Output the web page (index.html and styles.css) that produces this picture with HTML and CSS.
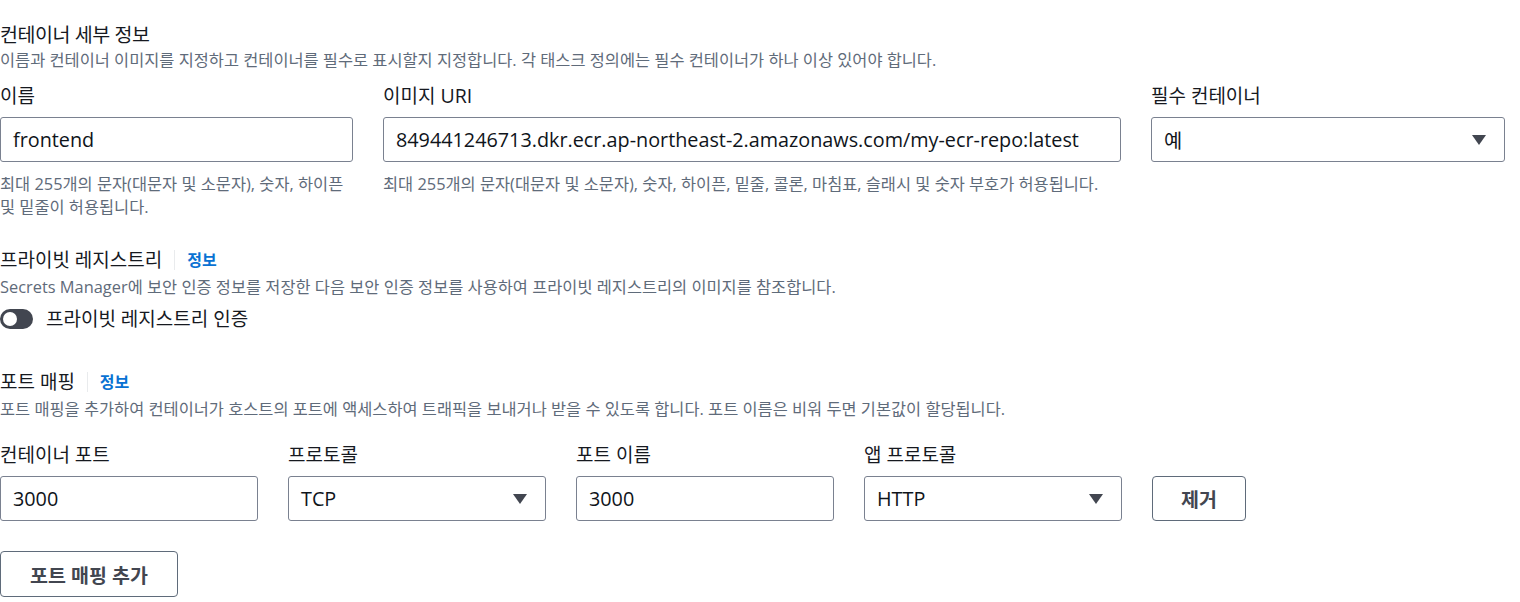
FILE: index.html
```html
<!DOCTYPE html>
<html lang="ko">
<head>
<meta charset="utf-8">
<title>컨테이너 세부 정보</title>
<link rel="stylesheet" href="styles.css">
</head>
<body>
<main class="page">
  <section class="sec sec-details">
    <h2 class="title">컨테이너 세부 정보</h2>
    <p class="desc">이름과 컨테이너 이미지를 지정하고 컨테이너를 필수로 표시할지 지정합니다. 각 태스크 정의에는 필수 컨테이너가 하나 이상 있어야 합니다.</p>
    <div class="grid3">
      <div class="field">
        <label class="label">이름</label>
        <div class="control"><span class="val">frontend</span></div>
        <p class="help">최대 255개의 문자(대문자 및 소문자), 숫자, 하이픈 및 밑줄이 허용됩니다.</p>
      </div>
      <div class="field">
        <label class="label">이미지 <span class="lat">URI</span></label>
        <div class="control"><span class="val">849441246713.dkr.ecr.ap-northeast-2.amazonaws.com/my-ecr-repo:latest</span></div>
        <p class="help">최대 255개의 문자(대문자 및 소문자), 숫자, 하이픈, 밑줄, 콜론, 마침표, 슬래시 및 숫자 부호가 허용됩니다.</p>
      </div>
      <div class="field">
        <label class="label">필수 컨테이너</label>
        <div class="control select"><span class="val">예</span><svg class="caret" width="14" height="10" viewBox="0 0 14 10"><path d="M0 0h14L7 10z"/></svg></div>
      </div>
    </div>
  </section>

  <section class="sec sec-registry">
    <div class="head"><span>프라이빗 레지스트리</span><span class="divider"></span><a class="info">정보</a></div>
    <p class="desc desc-tight">Secrets Manager에 보안 인증 정보를 저장한 다음 보안 인증 정보를 사용하여 프라이빗 레지스트리의 이미지를 참조합니다.</p>
    <div class="toggle-row">
      <span class="toggle"><span class="knob"></span></span>
      <span class="toggle-label">프라이빗 레지스트리 인증</span>
    </div>
  </section>

  <section class="sec sec-ports">
    <div class="head"><span>포트 매핑</span><span class="divider"></span><a class="info">정보</a></div>
    <p class="desc desc-tight">포트 매핑을 추가하여 컨테이너가 호스트의 포트에 액세스하여 트래픽을 보내거나 받을 수 있도록 합니다. 포트 이름은 비워 두면 기본값이 할당됩니다.</p>
    <div class="port-grid">
      <div class="field">
        <label class="label">컨테이너 포트</label>
        <div class="control"><span class="val">3000</span></div>
      </div>
      <div class="field">
        <label class="label">프로토콜</label>
        <div class="control select"><span class="val">TCP</span><svg class="caret" width="14" height="10" viewBox="0 0 14 10"><path d="M0 0h14L7 10z"/></svg></div>
      </div>
      <div class="field">
        <label class="label">포트 이름</label>
        <div class="control"><span class="val">3000</span></div>
      </div>
      <div class="field">
        <label class="label">앱 프로토콜</label>
        <div class="control select"><span class="val">HTTP</span><svg class="caret" width="14" height="10" viewBox="0 0 14 10"><path d="M0 0h14L7 10z"/></svg></div>
      </div>
      <button class="btn btn-remove">제거</button>
    </div>
    <button class="btn btn-add">포트 매핑 추가</button>
  </section>
</main>
</body>
</html>
```

FILE: styles.css
```css
* {
  box-sizing: border-box;
  margin: 0;
  padding: 0;
}

body {
  margin: 0;
  background: #ffffff;
  font-family: "Open Sans", "Noto Sans CJK KR", sans-serif;
  color: #16191f;
}

.page {
  width: 1520px;
  padding: 21px 15px 0 0;
}

.title {
  font-size: 19.5px;
  line-height: 28px;
  font-weight: 400;
  letter-spacing: -0.4px;
  color: #16191f;
}

.desc {
  font-size: 16.4px;
  line-height: 22px;
  color: #5f6b7a;
}

.desc-tight {
  margin-top: 2px;
}

.lat {
  font-size: 1.03em;
}

.grid3 {
  display: grid;
  grid-template-columns: 353px 738px 354px;
  column-gap: 30px;
  margin-top: 13px;
}

.label {
  display: block;
  font-size: 19px;
  line-height: 24px;
  color: #16191f;
}

.control {
  margin-top: 9px;
  height: 45px;
  border: 1px solid #7a8190;
  border-radius: 3px;
  padding: 0 12px;
  display: flex;
  align-items: center;
  font-size: 19.8px;
  color: #0f141a;
}

.select {
  justify-content: space-between;
  padding-right: 18px;
}

.caret {
  fill: #424650;
  flex: none;
}

.help {
  margin-top: 9.5px;
  font-size: 16.4px;
  line-height: 23px;
  color: #5f6b7a;
}

.sec-registry {
  margin-top: 28.5px;
}

.head {
  display: flex;
  align-items: center;
  font-size: 19px;
  line-height: 28px;
  color: #16191f;
}

.divider {
  width: 1px;
  height: 20px;
  background: #e9ebed;
  margin: 0 12px 0 12px;
}

.info {
  color: #0972d3;
  font-weight: 700;
  font-size: 16px;
  text-decoration: none;
}

.toggle-row {
  margin-top: 9px;
  display: flex;
  align-items: center;
  gap: 13px;
  line-height: 24px;
}

.toggle {
  width: 33px;
  height: 20px;
  border-radius: 10px;
  background: #424650;
  display: flex;
  align-items: center;
  padding-left: 3px;
}

.knob {
  width: 14px;
  height: 14px;
  border-radius: 50%;
  background: #ffffff;
}

.toggle-label {
  font-size: 19px;
  color: #16191f;
}

.sec-ports {
  margin-top: 37px;
}

.port-grid {
  display: grid;
  grid-template-columns: 258px 258px 258px 258px 94px;
  column-gap: 30px;
  margin-top: 23px;
  align-items: end;
}

.btn {
  font-family: "Open Sans", "Noto Sans CJK KR", sans-serif;
  font-weight: 700;
  font-size: 19.5px;
  color: #424650;
  background: #ffffff;
  border: 1px solid #5f6b7a;
  border-radius: 4px;
}

.btn-remove {
  height: 45px;
  width: 94px;
}

.btn-add {
  display: block;
  margin-top: 30px;
  width: 178px;
  height: 46px;
}
```
